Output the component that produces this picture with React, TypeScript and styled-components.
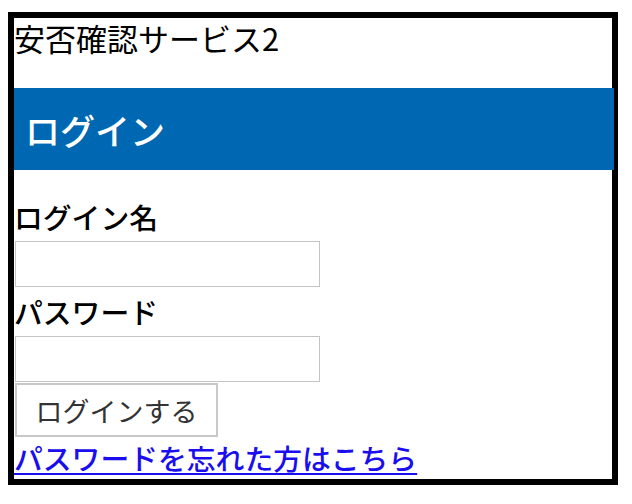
import React from "react";
import styled, { createGlobalStyle } from "styled-components";

const GlobalStyle = createGlobalStyle`
  body {
    margin: 0;
    background: #ffffff;
    font-family: "Noto Sans CJK JP", "Noto Sans", sans-serif;
  }
`;

const Frame = styled.div`
  box-sizing: border-box;
  width: 610px;
  height: 473px;
  margin: 12px 0 0 8px;
  border: 6px solid #000;
  display: flex;
  flex-direction: column;
  align-items: flex-start;
`;

const SiteTitle = styled.div`
  height: 70px;
  font-size: 31px;
  line-height: 39px;
  color: #000;
`;

const Header = styled.h1`
  box-sizing: border-box;
  width: 600px;
  height: 82px;
  margin: 0;
  padding-left: 11px;
  display: flex;
  align-items: center;
  background: #0068b2;
  color: #fff;
  font-size: 35px;
  font-weight: 500;
`;

const Form = styled.form`
  display: flex;
  flex-direction: column;
  align-items: flex-start;
  margin-top: 22px;
`;

const Label = styled.label`
  font-size: 28.8px;
  font-weight: 500;
  line-height: 49px;
  color: #000;
`;

const Field = styled.input`
  box-sizing: border-box;
  width: 305px;
  height: 46px;
  margin: 0 0 0 1px;
  border: 1px solid #c4c4c4;
  font-size: 20px;
`;

const Submit = styled.button`
  box-sizing: border-box;
  width: 203px;
  height: 54px;
  margin: 1px 0 0 1px;
  border: 2px solid #c8c8c8;
  background: #fff;
  color: #333;
  font-family: inherit;
  font-size: 27px;
  padding: 0;
`;

const ForgotLink = styled.a`
  font-size: 28.8px;
  font-weight: 500;
  line-height: 42px;
  color: #1a0dee;
  text-decoration: underline;
  text-underline-offset: 3px;
`;

export default function App() {
  return (
    <>
      <GlobalStyle />
      <Frame>
        <SiteTitle>安否確認サービス2</SiteTitle>
        <Header>ログイン</Header>
        <Form onSubmit={(e) => e.preventDefault()}>
          <Label>ログイン名</Label>
          <Field type="text" />
          <Label>パスワード</Label>
          <Field type="password" />
          <Submit type="submit">ログインする</Submit>
          <ForgotLink href="#">パスワードを忘れた方はこちら</ForgotLink>
        </Form>
      </Frame>
    </>
  );
}
